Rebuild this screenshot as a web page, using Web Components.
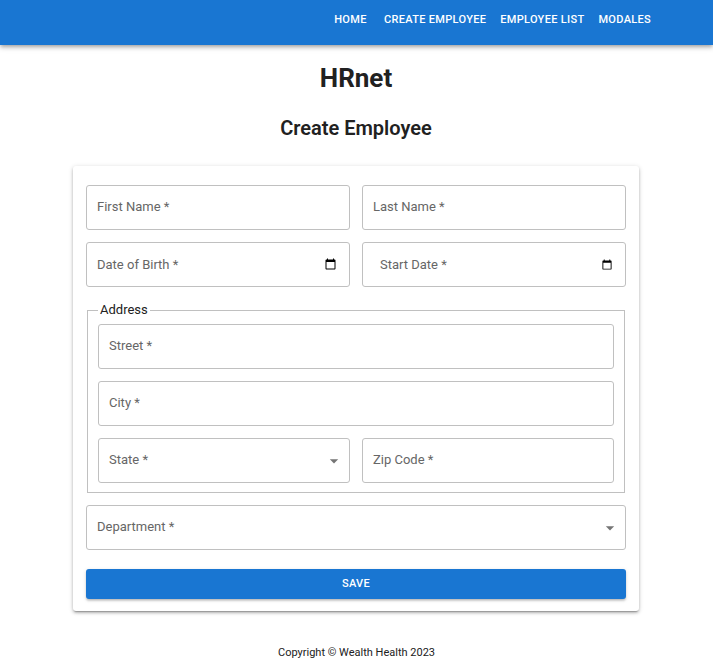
<!DOCTYPE html>
<html lang="en">
<head>
<meta charset="utf-8">
<meta name="viewport" content="width=device-width, initial-scale=1">
<title>HRnet - Create Employee</title>
<style>
  body {
    margin: 0;
    background: #fff;
    color: #212121;
    font-family: Roboto, "Liberation Sans", sans-serif;
    font-size: 13px;
    line-height: 16px;
    --primary: #1976d2;
    --outline: #c0c0c0;
    --muted: #666;
  }
</style>
</head>
<body>
<hr-app></hr-app>
<script>
  const define = (name, html, setup) => {
    const template = document.createElement('template');
    template.innerHTML = html;
    customElements.define(name, class extends HTMLElement {
      constructor() {
        super();
        this.attachShadow({ mode: 'open' }).append(template.content.cloneNode(true));
      }
      connectedCallback() {
        if (setup) setup(this, this.shadowRoot);
      }
    });
  };

  const fieldStyles = `
    :host { display: block; min-width: 0; }
    .box { display: grid; align-items: center; box-sizing: border-box; height: 45px;
      border: 1px solid var(--outline); border-radius: 3px; }
    .box:focus-within { border-color: var(--primary); }
    .box > * { grid-area: 1 / 1; }
    label { justify-self: start; padding: 0 10px 2px; color: var(--muted); pointer-events: none; z-index: 1; }
    input, select { box-sizing: border-box; width: 100%; height: 100%; min-width: 0; margin: 0;
      padding: 0 10px; border: 0; outline: 0; background: none; color: inherit; font: inherit; }
    .filled label { visibility: hidden; }
  `;

  const trackValue = (host, root) => {
    const control = root.querySelector('input, select');
    control.addEventListener('input', () =>
      root.querySelector('.box').classList.toggle('filled', control.value !== ''));
  };

  define('nav-link', `
    <style>
      :host { display: block; }
      a { display: block; box-sizing: border-box; min-width: 51px; padding: 6px 6px 5px;
        color: #fff; text-align: center; text-decoration: none; text-transform: uppercase;
        font-size: 11px; line-height: 18px; font-weight: 500; letter-spacing: 0.02857em; white-space: nowrap; }
    </style>
    <a><slot></slot></a>
  `, (host, root) => { root.querySelector('a').href = host.getAttribute('href'); });

  define('app-header', `
    <style>
      :host { display: block; background: var(--primary);
        box-shadow: 0 2px 3px -1px rgb(0 0 0 / .2), 0 3px 4px rgb(0 0 0 / .14), 0 1px 8px rgb(0 0 0 / .12); }
      nav { display: flex; justify-content: flex-end; gap: 2px; padding: 5px 56px 11px 16px; }
    </style>
    <nav><slot></slot></nav>
  `);

  define('text-field', `
    <style>${fieldStyles}</style>
    <div class="box">
      <label for="control"><slot></slot></label>
      <input id="control" type="text" required>
    </div>
  `, trackValue);

  define('date-field', `
    <style>${fieldStyles}
      label { padding-bottom: 0; }
      input::-webkit-datetime-edit { opacity: 0; }
      .filled input::-webkit-datetime-edit { opacity: 1; }
      :host([inset]) label { padding-left: 17px; }
      :host([inset]) input { padding: 0 10px; font-size: 12px; }
    </style>
    <div class="box">
      <label for="control"><slot></slot></label>
      <input id="control" type="date" required>
    </div>
  `, trackValue);

  define('select-field', `
    <style>${fieldStyles}
      select { appearance: none; }
      svg { justify-self: end; width: 20px; height: 20px; margin-right: 5px; fill: #757575; pointer-events: none; }
    </style>
    <div class="box">
      <label for="control"><slot></slot></label>
      <select id="control" required><option value=""></option></select>
      <svg viewBox="0 0 24 24" aria-hidden="true"><path d="M7 10l5 5 5-5z"/></svg>
    </div>
  `, (host, root) => {
    const select = root.querySelector('select');
    for (const name of host.getAttribute('options').split(',')) select.add(new Option(name, name));
    select.selectedIndex = 0;
    trackValue(host, root);
  });

  define('field-grid', `
    <style>
      :host { display: grid; grid-template-columns: 1fr 1fr; gap: 12px; }
      ::slotted([wide]) { grid-column: 1 / -1; }
    </style>
    <slot></slot>
  `);

  define('field-group', `
    <style>
      :host { display: block; }
      fieldset { min-width: 0; margin: 3px 1px 0; padding: 6px 10px 9px; border: 1px solid var(--outline); }
      legend { padding: 0 2px; }
    </style>
    <fieldset>
      <legend><slot name="legend"></slot></legend>
      <slot></slot>
    </fieldset>
  `);

  define('save-button', `
    <style>
      :host { display: block; margin-top: 7px; }
      button { display: block; width: 100%; padding: 6px 13px; border: 0; border-radius: 3px;
        background: var(--primary); color: #fff; font: 500 11px/18px Roboto, "Liberation Sans", sans-serif;
        letter-spacing: 0.02857em; text-transform: uppercase; cursor: pointer;
        box-shadow: 0 2px 2px -2px rgb(0 0 0 / .2), 0 2px 2px rgb(0 0 0 / .14), 0 1px 4px rgb(0 0 0 / .12); }
    </style>
    <button type="button"><slot></slot></button>
  `);

  define('form-card', `
    <style>
      :host { display: block; padding: 19px 13px 12px; border-radius: 3px; background: #fff;
        box-shadow: 0 2px 1px -1px rgb(0 0 0 / .2), 0 2px 3px rgb(0 0 0 / .2), 0 1px 5px rgb(0 0 0 / .16); }
    </style>
    <slot></slot>
  `);

  define('hr-app', `
    <style>
      :host { display: block; }
      main { padding: 0 74px 0 73px; }
      h1, h2 { margin: 0; text-align: center; font-weight: 700; }
      h1 { padding-top: 17px; font-size: 26px; line-height: 32px; }
      h2 { padding: 22px 0 25px; font-size: 20px; line-height: 25px; font-weight: 600; }
      footer { padding: 34px 16px 7px; text-align: center; font-size: 11px; line-height: 16px; }
    </style>
    <app-header>
      <nav-link href="#home">Home</nav-link>
      <nav-link href="#create-employee">Create Employee</nav-link>
      <nav-link href="#employee-list">Employee List</nav-link>
      <nav-link href="#modales">Modales</nav-link>
    </app-header>
    <main>
      <h1>HRnet</h1>
      <h2>Create Employee</h2>
      <form-card>
        <field-grid>
          <text-field>First Name *</text-field>
          <text-field>Last Name *</text-field>
          <date-field>Date of Birth *</date-field>
          <date-field inset>Start Date *</date-field>
          <field-group wide>
            <span slot="legend">Address</span>
            <field-grid>
              <text-field wide>Street *</text-field>
              <text-field wide>City *</text-field>
              <select-field options="Alabama,Alaska,Arizona,California,Colorado">State *</select-field>
              <text-field>Zip Code *</text-field>
            </field-grid>
          </field-group>
          <select-field wide options="Sales,Marketing,Engineering,Human Resources,Legal">Department *</select-field>
          <save-button wide>Save</save-button>
        </field-grid>
      </form-card>
    </main>
    <footer>Copyright © Wealth Health 2023</footer>
  `);
</script>
</body>
</html>
